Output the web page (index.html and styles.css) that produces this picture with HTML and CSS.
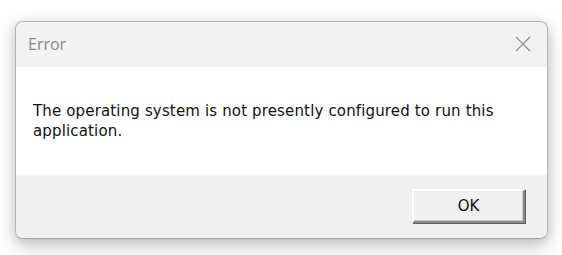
FILE: index.html
```html
<!DOCTYPE html>
<html>
<head>
<meta charset="utf-8">
<link rel="stylesheet" href="styles.css">
</head>
<body>
<div class="stage">
  <div class="dialog">
    <div class="titlebar">
      <span class="title">Error</span>
      <span class="close" aria-label="Close">
        <svg width="16" height="16" viewBox="0 0 16 16"><path d="M1 1 L15 15 M15 1 L1 15" stroke="#8c8c8c" stroke-width="1.1" fill="none"/></svg>
      </span>
    </div>
    <div class="content">
      <p class="message">The operating system is not presently configured to run this application.</p>
    </div>
    <div class="footer">
      <button class="btn">OK</button>
    </div>
  </div>
</div>
</body>
</html>
```
FILE: styles.css
```css
html, body {
  margin: 0;
  padding: 0;
  background: #ffffff;
}
.stage {
  width: 562px;
  height: 255px;
  padding: 21px 0 0 15px;
  box-sizing: border-box;
  overflow: hidden;
}
.dialog {
  width: 533px;
  height: 218px;
  box-sizing: border-box;
  border: 1px solid #b4b4b4;
  border-bottom-color: #a2a2a2;
  border-radius: 8px;
  overflow: hidden;
  display: flex;
  flex-direction: column;
  box-shadow: 0 7px 18px rgba(0,0,0,0.24), 0 0 10px rgba(0,0,0,0.08);
  background: #f0f0f0;
}
.titlebar {
  height: 45px;
  flex: none;
  background: #f2f2f2;
  display: flex;
  align-items: center;
  justify-content: space-between;
  padding: 0 16px 0 12px;
}
.title {
  font-family: "Open Sans", sans-serif;
  font-size: 16px;
  color: #8a8a8a;
  line-height: 22px;
  margin-top: -1px;
}
.close {
  display: flex;
  width: 16px;
  height: 16px;
  margin-top: -2px;
}
.content {
  height: 108px;
  flex: none;
  background: #ffffff;
  padding: 0 18px 0 17px;
  box-sizing: border-box;
}
.message {
  margin: 0;
  width: 480px;
  padding-top: 34px;
  font-family: "DejaVu Sans", sans-serif;
  font-size: 15px;
  letter-spacing: 0.15px;
  line-height: 20px;
  color: #111111;
}
.footer {
  flex: 1;
  display: flex;
  justify-content: flex-end;
  align-items: flex-start;
  padding: 14px 22px 0 0;
  background: #f0f0f0;
}
.btn {
  width: 113px;
  height: 34px;
  box-sizing: border-box;
  background: #f0f0f0;
  border: 2px solid;
  border-color: #ffffff #8a8a8a #8a8a8a #ffffff;
  box-shadow: inset -1px -1px 0 #c8c8c8, 1px 1px 0 #5c5c5c;
  font-family: "DejaVu Sans", sans-serif;
  font-size: 15px;
  color: #111111;
  padding: 0;
}
```
